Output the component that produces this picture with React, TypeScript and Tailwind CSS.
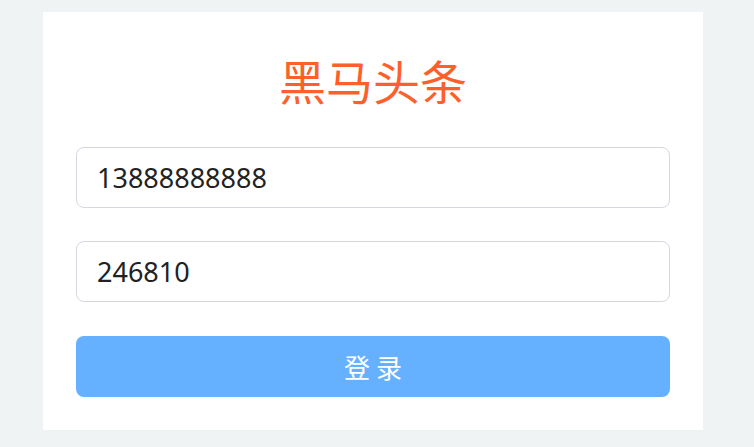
import React from 'react';

const App: React.FC = () => {
  return (
    <div className="min-h-[447px] w-full bg-[#f0f3f3] pt-[12px] pb-[17px] font-['Noto_Sans','Noto_Sans_CJK_SC',sans-serif]">
      <div className="ml-[43px] w-[660px] bg-white px-[33px] pt-[33px] pb-[33px]">
        <h1 className="h-[69px] text-center text-[47px] leading-[69px] text-[#fd5f2d] font-['Noto_Sans_CJK_SC',sans-serif]">
          黑马头条
        </h1>
        <div className="mt-[33px] flex flex-col gap-[33px]">
          <input
            className="h-[61px] w-full rounded-[8px] border border-[#d5d8de] px-[20px] text-[27px] text-[#222] outline-none"
            defaultValue="13888888888"
          />
          <input
            className="h-[61px] w-full rounded-[8px] border border-[#d5d8de] px-[20px] text-[27px] text-[#222] outline-none"
            defaultValue="246810"
          />
          <button className="mt-[1px] h-[61px] w-full rounded-[8px] bg-[#66b1ff] text-[26px] text-white font-['Noto_Sans_CJK_SC',sans-serif]">
            登 录
          </button>
        </div>
      </div>
    </div>
  );
};

export default App;
